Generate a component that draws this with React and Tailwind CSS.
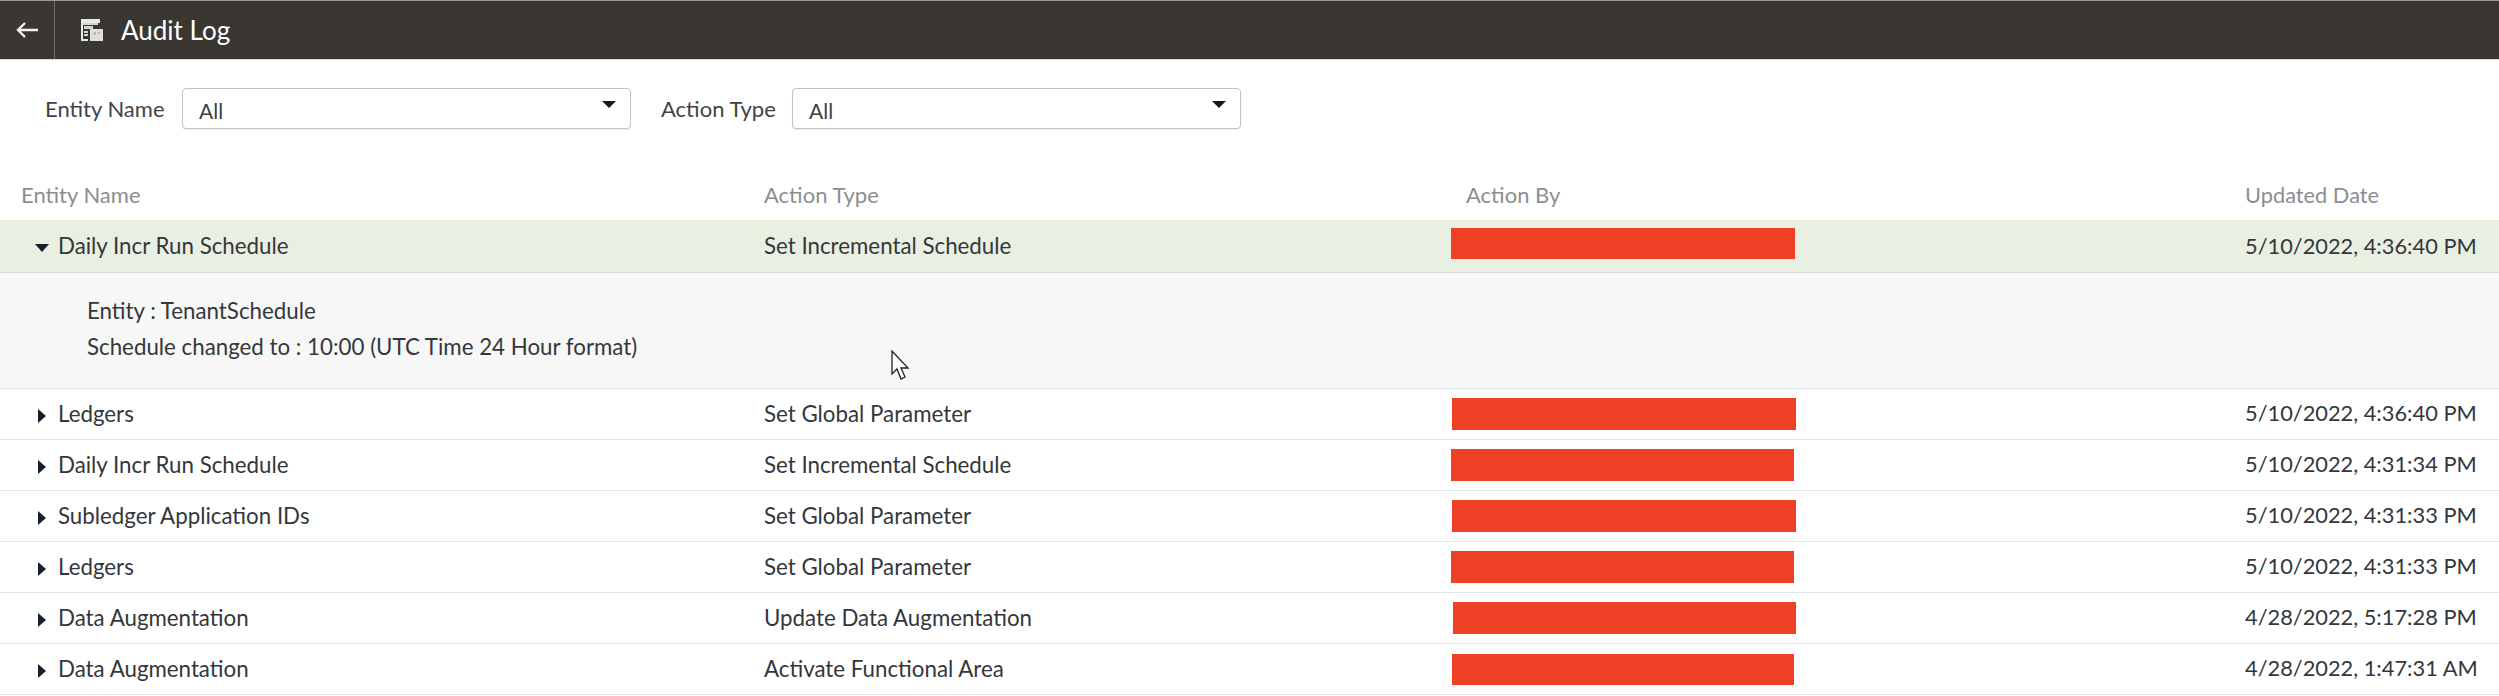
import React from "react";

const rows = [
  { name: "Ledgers", action: "Set Global Parameter", date: "5/10/2022, 4:36:40 PM", bar: "ml-[1px] w-[344px] h-[32px]" },
  { name: "Daily Incr Run Schedule", action: "Set Incremental Schedule", date: "5/10/2022, 4:31:34 PM", bar: "ml-0 w-[343px] h-[32px]" },
  { name: "Subledger Application IDs", action: "Set Global Parameter", date: "5/10/2022, 4:31:33 PM", bar: "ml-[1px] w-[344px] h-[32px]" },
  { name: "Ledgers", action: "Set Global Parameter", date: "5/10/2022, 4:31:33 PM", bar: "ml-0 w-[343px] h-[32px]" },
  { name: "Data Augmentation", action: "Update Data Augmentation", date: "4/28/2022, 5:17:28 PM", bar: "ml-[2px] w-[343px] h-[32px]" },
  { name: "Data Augmentation", action: "Activate Functional Area", date: "4/28/2022, 1:47:31 AM", bar: "ml-[1px] w-[342px] h-[31px]" },
];

function Caret({ open }) {
  return (
    <svg width="14" height="14" viewBox="0 0 14 14" className="shrink-0 mt-[3px] text-[#16202c]">
      {open ? <path d="M0 3h14L7 11z" fill="currentColor" /> : <path d="M3 0l8 7-8 7z" fill="currentColor" />}
    </svg>
  );
}

function Select({ width }) {
  return (
    <div className={`${width} h-[41px] flex items-center justify-between pl-[16px] pr-[14px] border border-[#c4c4c4] rounded-[4px] bg-white shadow-[0_1px_1px_rgba(0,0,0,0.08)]`}>
      <span className="text-[21px] leading-none text-[#3a3e43] mt-[4px]">All</span>
      <svg width="14" height="7" viewBox="0 0 14 7" className="-mt-[9px]">
        <path d="M0 0h14L7 7z" fill="#16181c" />
      </svg>
    </div>
  );
}

export default function App() {
  return (
    <div className="min-h-screen h-[696px] overflow-hidden bg-white font-['Lato',sans-serif]">
      <header className="flex items-center h-[60px] bg-[#3a3632] border-t border-[#9a9896] border-b-[#d8d8d8] border-b">
        <div className="flex items-center justify-center w-[55px] h-full border-r border-[#6f6b67] pr-[1px]">
          <svg width="24" height="18" viewBox="0 0 24 18" fill="none" stroke="#f4f4f2" strokeWidth="2.4">
            <path d="M23 9H3M10 2L3 9l7 7" />
          </svg>
        </div>
        <svg width="22" height="22" viewBox="0 0 22 22" className="ml-[26px]">
          <path d="M0 0h19v4H0zM0 4h2v18H0zM2 20h5v2H2z" fill="#e8e8e4" />
          <path d="M2 4h15v2H2zM3 7h9v3H3zM3 12h4v2H3zM3 15h4v2H3z" fill="#d5d5d0" />
          <path d="M9 10h13v12H9z" fill="#dededa" />
          <path d="M13 13h1.500v3H13zM17 13h1.500v2H17z" fill="#a5a5a2" />
        </svg>
        <h1 className="ml-[18px] text-[26px] font-normal leading-none text-white">Audit Log</h1>
      </header>

      <div className="flex items-center h-[41px] mt-[28px] pl-[45px] text-[#3f4347] text-[22px]">
        <span className="w-[137px]">Entity Name</span>
        <Select width="w-[449px]" />
        <span className="ml-[30px] w-[131px]">Action Type</span>
        <Select width="w-[449px]" />
      </div>

      <div className="mt-[51px] h-[40px] flex items-start text-[22px] leading-[29px] text-[#8b8e91]">
        <div className="w-[764px] pl-[21px]">Entity Name</div>
        <div className="w-[702px]">Action Type</div>
        <div className="w-[779px]">Action By</div>
        <div className="text-[21.8px]">Updated Date</div>
      </div>

      <div className="flex items-center h-[53px] bg-[#e9efe1] border-b border-[#d4dccc] text-[22.300px] text-[#33373c]">
        <div className="flex items-center w-[764px] pl-[35px] gap-[9px]">
          <Caret open />
          <span>Daily Incr Run Schedule</span>
        </div>
        <div className="w-[687px]">Set Incremental Schedule</div>
        <div className="w-[794px]">
          <div className="w-[344px] h-[31px] -mt-[5px] bg-[#ee4024]" />
        </div>
        <div className="text-[21.800px]">5/10/2022, 4:36:40 PM</div>
      </div>

      <div className="h-[116px] pl-[87px] pt-[20px] bg-[#f7f7f7] border-b border-[#dfe1e3] text-[22.300px] leading-[36px] text-[#33373c]">
        <div>Entity : TenantSchedule</div>
        <div>Schedule changed to : 10:00 (UTC Time 24 Hour format)</div>
      </div>

      {rows.map((row, i) => (
        <div key={i} className="flex items-center h-[51px] border-b border-[#e4e5e6] text-[22.300px] text-[#33373c]">
          <div className="flex items-center w-[764px] pl-[35px] gap-[9px]">
            <Caret />
            <span className="-mt-[1px]">{row.name}</span>
          </div>
          <div className="w-[687px] -mt-[1px]">{row.action}</div>
          <div className="w-[794px]">
            <div className={`${row.bar} bg-[#ee4024]`} />
          </div>
          <div className="text-[21.800px] -mt-[1px]">{row.date}</div>
        </div>
      ))}

      {/* mouse pointer */}
      <svg width="20" height="30" viewBox="0 0 20 30" className="absolute left-[890px] top-[350px]">
        <path d="M2 1v23l5-5 4 10 4-2-4-9h7z" fill="#fff" stroke="#222" strokeWidth="1.300" />
      </svg>
    </div>
  );
}
